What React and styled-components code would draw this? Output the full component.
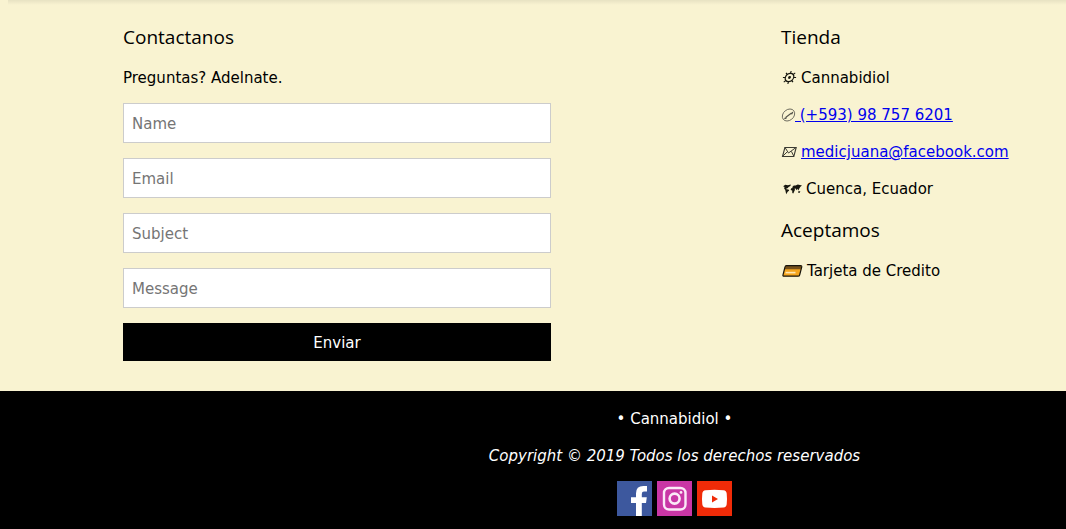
import React from "react";
import styled, { createGlobalStyle } from "styled-components";

const GlobalStyle = createGlobalStyle`
  *, *::before, *::after { box-sizing: border-box; }
  body {
    margin: 0;
    background: #000;
    font-family: Verdana, "DejaVu Sans", sans-serif;
    font-size: 15px;
    line-height: 24px;
    color: #000;
  }
`;

const Contact = styled.main`
  display: grid;
  grid-template-columns: 428fr 285fr;
  column-gap: 230px;
  padding: 21px 0 30px 123px;
  background: #f9f3d1 linear-gradient(rgba(0, 0, 0, 0.07), rgba(0, 0, 0, 0)) 8px 0 / 100% 5px no-repeat;
`;

const Column = styled.section`
  min-width: 0;
`;

const Heading = styled.h2`
  margin: 0 0 13px;
  font-family: "Segoe UI", "Open Sans", sans-serif;
  font-size: 19px;
  font-weight: 400;
  line-height: 32px;
`;

const Line = styled.p`
  margin: 0 0 13px;
  white-space: nowrap;
`;

const Form = styled.form`
  display: grid;
  gap: 15px;
`;

const Field = styled.input`
  display: block;
  width: 100%;
  height: 40px;
  padding: 9px 8px 7px;
  border: 1px solid #ccc;
  border-radius: 0;
  background: #fff;
  font: inherit;

  &::placeholder {
    color: #757575;
    opacity: 1;
  }
`;

const Submit = styled.button`
  height: 38px;
  padding: 2px 0 0;
  border: 0;
  background: #000;
  color: #fff;
  font: inherit;
  cursor: pointer;
`;

const Entry = styled(Line)`
  display: flex;
  align-items: center;
  gap: ${(p) => p.$gap || 4}px;

  svg { flex: none; }
`;

const Link = styled.a`
  color: #0000ee;
  white-space: pre;
`;

const Footer = styled.footer`
  padding: 16px 0 13px 283px;
  background: #000;
  color: #fff;
  text-align: center;
`;

const Copyright = styled(Line)`
  font-style: italic;
`;

const Socials = styled.nav`
  display: flex;
  justify-content: center;
  gap: 5px;
`;

const Social = styled.a`
  display: block;
  width: 35px;
  height: 35px;
  background: ${(p) => p.$color};

  svg { display: block; }
`;

const GearIcon = () => (
  <svg width="16" height="16" viewBox="0 0 16 16" fill="none" stroke="#17170f" aria-hidden="true">
    <g transform="translate(8.5 7.5) skewX(-14)">
      <circle r="4.2" strokeWidth="1.2" />
      <circle r="1.4" fill="#17170f" stroke="none" />
      <path
        d="M0-4.2V-6.6M0 4.2V6.6M-4.2 0H-6.6M4.2 0H6.6M-3-3L-4.6-4.6M3-3L4.6-4.6M-3 3L-4.6 4.6M3 3L4.6 4.6"
        strokeWidth="1.1"
      />
    </g>
  </svg>
);

const PhoneIcon = () => (
  <svg width="13" height="16" viewBox="0 0 13 16" fill="none" stroke="#55544a" overflow="visible" aria-hidden="true">
    <g transform="translate(7.5 8) skewX(-14)">
      <circle r="6" strokeWidth="0.8" />
      <path d="M-3.3 3.5L-1.8 3.2L-1.8 2L2 -1.6L3 -1.4L3.5-3" strokeWidth="1.4" />
    </g>
  </svg>
);

const MailIcon = () => (
  <svg width="16" height="16" viewBox="0 0 16 16" fill="none" stroke="#3b3a32" aria-hidden="true">
    <path d="M3.9 3.5H15.2L12.8 12.5H1.5Z" strokeWidth="1.1" />
    <path d="M4 3.5L7.5 9L15 3.5M1.7 12.2L6.3 7.8M12.8 12.2L10.4 7.4" strokeWidth="1" />
  </svg>
);

const MapIcon = () => (
  <svg width="21" height="16" viewBox="0 0 21 16" fill="#17170f" aria-hidden="true">
    <path d="M2.1 5.3L4.3 3.8L7 4.3L9.8 3.4L9.4 5L7.6 6L6.6 7.2L5.6 7.3L5.4 8.3L7.5 8.6L8.2 9.6L6.7 10.7L5.2 13.2L4.6 10.4L4.2 8.8L3.2 7.7L3.5 6Z" />
    <path d="M11 6.3L12.8 4.5L14.6 4.6L16.8 3.4L21 4.4L19.4 5.8L18.2 7.8L17.3 9.5L16.4 7.7L15.5 9.2L14.6 7.5L13.5 7.8L14 8.8L12.3 12.4L11.3 12L11.2 9.6L9.6 8.9L10.2 7.2L12 7Z" />
    <path d="M17.4 10.3L19.4 10.2L18.5 12L17 11.6Z" />
  </svg>
);

const CardIcon = () => (
  <svg width="22" height="16" viewBox="0 0 22 16" aria-hidden="true">
    <path d="M5.4 2.6H19.5Q21 2.6 20.7 4L18.7 11.8Q18.4 13.2 17 13.2H3Q1.6 13.2 2 11.8L4 4Q4.3 2.6 5.4 2.6Z" fill="#f5a51d" />
    <path d="M4.8 3H20.3L19.6 6.3H3.7Z" fill="#765019" />
    <path d="M4.5 9.6H14.5" stroke="#ffe7b3" strokeWidth="1.6" />
    <path d="M5.4 2.6H19.5Q21 2.6 20.7 4L18.7 11.8Q18.4 13.2 17 13.2H3Q1.6 13.2 2 11.8L4 4Q4.3 2.6 5.4 2.6Z" fill="none" stroke="#17140c" strokeWidth="1.2" />
  </svg>
);

const FacebookIcon = () => (
  <svg width="35" height="35" viewBox="0 0 35 35" aria-hidden="true">
    <path d="M19 35V22H14V16.2H19V12.4Q19 5 26.4 5H30V10.6H27Q24.8 10.6 24.8 13V16.2H29.8L29 22H24.8V35Z" fill="#fff" />
  </svg>
);

const InstagramIcon = () => (
  <svg width="35" height="35" viewBox="0 0 35 35" fill="none" stroke="#fbe9f7" aria-hidden="true">
    <rect x="7" y="7" width="21.5" height="21.5" rx="5" strokeWidth="2.4" />
    <circle cx="17.6" cy="17.6" r="5" strokeWidth="2.6" />
    <circle cx="24" cy="11.4" r="1.4" fill="#fbe9f7" stroke="none" />
  </svg>
);

const YoutubeIcon = () => (
  <svg width="35" height="35" viewBox="0 0 35 35" aria-hidden="true">
    <path d="M8.5 9.3Q17.5 8.4 26.5 9.3Q29.4 9.6 29.7 12.5Q30.3 18 29.7 23.3Q29.4 26.2 26.5 26.5Q17.5 27.4 8.5 26.5Q5.6 26.2 5.3 23.3Q4.7 18 5.3 12.5Q5.6 9.6 8.5 9.3Z" fill="#fff" />
    <path d="M15 14.4V21.6L21 18Z" fill="#f02b08" />
  </svg>
);

const fields = ["Name", "Email", "Subject", "Message"];

export default function App() {
  return (
    <>
      <GlobalStyle />
      <Contact>
        <Column>
          <Heading>Contactanos</Heading>
          <Line>Preguntas? Adelnate.</Line>
          <Form onSubmit={(e) => e.preventDefault()}>
            {fields.map((name) => (
              <Field
                key={name}
                type={name === "Email" ? "email" : "text"}
                name={name}
                placeholder={name}
                aria-label={name}
              />
            ))}
            <Submit type="submit">Enviar</Submit>
          </Form>
        </Column>
        <Column>
          <Heading>Tienda</Heading>
          <Entry><GearIcon />Cannabidiol</Entry>
          <Entry $gap={1}>
            <PhoneIcon />
            <Link href="tel:+593987576201"> (+593) 98 757 6201</Link>
          </Entry>
          <Entry>
            <MailIcon />
            <Link href="mailto:medicjuana@facebook.com">medicjuana@facebook.com</Link>
          </Entry>
          <Entry><MapIcon />Cuenca, Ecuador</Entry>
          <Heading>Aceptamos</Heading>
          <Entry><CardIcon />Tarjeta de Credito</Entry>
        </Column>
      </Contact>
      <Footer>
        <Line>• Cannabidiol •</Line>
        <Copyright>Copyright © 2019 Todos los derechos reservados</Copyright>
        <Socials aria-label="Redes sociales">
          <Social href="#facebook" aria-label="Facebook" $color="#3d589e"><FacebookIcon /></Social>
          <Social href="#instagram" aria-label="Instagram" $color="#c936a5"><InstagramIcon /></Social>
          <Social href="#youtube" aria-label="YouTube" $color="#f02b08"><YoutubeIcon /></Social>
        </Socials>
      </Footer>
    </>
  );
}
